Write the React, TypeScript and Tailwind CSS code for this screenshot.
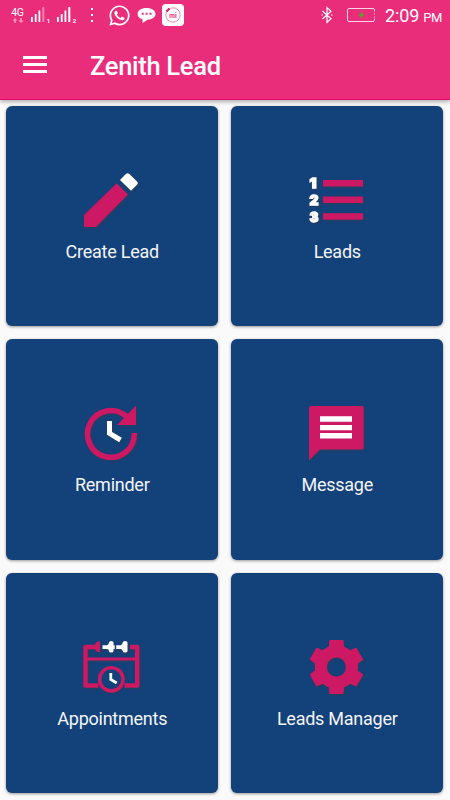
import type { ReactNode } from "react";
import { FaWhatsapp } from "react-icons/fa";

const PINK = "#cd1864";

const IconBox = ({ children }: { children: ReactNode }) => (
    <svg width="60" height="60" viewBox="0 0 60 60" fill={PINK} className="drop-shadow-[1px_1px_1px_rgba(60,60,60,0.55)]">
        {children}
    </svg>
);

const PencilIcon = () => (
    <IconBox>
        <path d="M2 45L34.7 13.3L46 24.5L14 57H2Z" />
        <path d="M38 10L43.8 4Q45.6 2.4 47.4 4L55 11.4Q56.6 13 55 14.8L49 20.8Z" fill="white" />
    </IconBox>
);

const ListIcon = () => (
    <IconBox>
        <rect x="16" y="10" width="40" height="6.5" />
        <rect x="16" y="26.5" width="40" height="6.5" />
        <rect x="16" y="43.2" width="40" height="6.5" />
        <g fill="white" stroke="white" strokeWidth="1.3" fontFamily="Inter, sans-serif" fontSize="13.6" fontWeight="900">
            <text x="2.5" y="18.2" textLength="7" lengthAdjust="spacingAndGlyphs">1</text>
            <text x="2.5" y="35" textLength="9" lengthAdjust="spacingAndGlyphs">2</text>
            <text x="2.5" y="52" textLength="9" lengthAdjust="spacingAndGlyphs">3</text>
        </g>
    </IconBox>
);

const ReminderIcon = () => (
    <IconBox>
        <path d="M52.3 30A23.4 23.4 0 1 1 44.5 13.5" fill="none" stroke={PINK} strokeWidth="5.6" />
        <path d="M54 2.5V22H35Z" />
        <path d="M27.5 18V30.3L38.5 37" fill="none" stroke="white" strokeWidth="5" />
    </IconBox>
);

const MessageIcon = () => (
    <IconBox>
        <path d="M4 3H55Q56.7 3 56.7 5V44.5Q56.7 46.5 55 46.5H13L2 57.5V5Q2 3 4 3Z" />
        <path d="M13 13.3h32v5.4H13zM13 22h32v5.2H13zM13 30h32v5.6H13z" fill="white" />
    </IconBox>
);

const CalendarIcon = () => (
    <IconBox>
        <path d="M14.5 11H3.5V49.4H16.5M48 11H55.2V49.4H42.5" fill="none" stroke={PINK} strokeWidth="4.5" strokeLinejoin="round" />
        <path d="M3 23H56" stroke={PINK} strokeWidth="3" />
        <path d="M13 9Q14 5.5 16 5.5H18V16H16Q14 16 13 13Z" />
        <g fill="white">
            <path d="M20.5 9.3H25Q27 8.7 27 6.5Q27.3 5 29 5Q31.5 5 31.5 6.5V9.3H32.7V12.9H31.5V15Q31.5 16.5 29 16.5Q27 16.5 27 15Q26.8 13 25 12.9H20.5Z" />
            <path d="M34.2 9.3H38.5Q40.7 8.7 40.7 6.5Q41 5 43 5Q45.5 5 45.5 6.5V15Q45.5 16.5 43 16.5Q40.7 16.5 40.7 15Q40.3 13 38.5 12.9H34.2Z" />
        </g>
        <circle cx="29.3" cy="43.3" r="11.7" fill="#13417a" stroke={PINK} strokeWidth="3.4" />
        <path d="M28.8 37V43.5L34.7 47" fill="none" stroke="white" strokeWidth="2.8" />
    </IconBox>
);

const GearIcon = () => (
    <IconBox>
        <g transform="translate(29.4 31)">
            <circle r="14.5" fill="none" stroke={PINK} strokeWidth="10" />
            {[0, 60, 120, 180, 240, 300].map((angle) => (
                <path key={angle} transform={`rotate(${angle})`} d="M-6.2 -27H6.2Q7 -27 7.1 -26.2L7.6 -20.4Q9.5 -19.6 11.5 -18L7.5 -12H-7.5L-11.5 -18Q-9.5 -19.6 -7.6 -20.4L-7.1 -26.2Q-7 -27 -6.2 -27Z" />
            ))}
        </g>
    </IconBox>
);

const tiles = [
    { label: "Create Lead", icon: <PencilIcon /> },
    { label: "Leads", icon: <ListIcon /> },
    { label: "Reminder", icon: <ReminderIcon /> },
    { label: "Message", icon: <MessageIcon /> },
    { label: "Appointments", icon: <CalendarIcon /> },
    { label: "Leads Manager", icon: <GearIcon /> },
];

const Signal = ({ sim }: { sim: number }) => (
    <svg width="20" height="18" viewBox="0 0 20 18" fill="white">
        <path d="M0 11h1.8v5H0zM3.8 8h1.8v8H3.8zM7.5 4.5h1.8V16H7.5z" />
        <path d="M11.3 1h2v15h-2z" opacity={sim === 1 ? 0.4 : 1} />
        <text x="15.8" y="17.3" fontSize="6" fontWeight="700">{sim}</text>
    </svg>
);

const StatusBar = () => (
    <div className="flex h-[30px] items-center pl-[11px] pr-[10px] text-white">
        <div className="flex w-[13px] flex-col items-center">
            <span className="text-[10.5px] leading-[11px] tracking-[-0.3px]">4G</span>
            <svg width="12" height="5" viewBox="0 0 12 5" fill="white" opacity="0.5">
                <path d="M3 0L5.5 2.5H3.8V5H2.2V2.5H0.5ZM9 5L6.5 2.5H8.2V0H9.8V2.5H11.5Z" />
            </svg>
        </div>
        <div className="ml-[7px] flex gap-[6px]">
            <Signal sim={1} />
            <Signal sim={2} />
        </div>
        <svg className="ml-[13px]" width="4" height="16" viewBox="0 0 4 16" fill="white">
            <path d="M1 1h2v2H1zM1 7h2v2H1zM1 13h2v2H1z" />
        </svg>
        <FaWhatsapp size={23} className="ml-[14px]" />
        <svg className="ml-[6px]" width="19" height="17" viewBox="0 0 19 17">
            <path d="M9.5 1C14.8 1 18.5 3.6 18.5 7S14.8 12.7 10.5 12.7L5.5 16V12.3C2.2 11.5 0.6 9.4 0.6 7C0.6 3.6 4.2 1 9.5 1Z" fill="white" />
            <path d="M4.7 5.8h2v2h-2zM8.6 5.8h2v2h-2zM12.5 5.8h2v2h-2z" fill="#e92d7b" />
        </svg>
        <svg className="ml-[6px]" width="22" height="22" viewBox="0 0 22 22">
            <rect width="22" height="22" rx="4" fill="white" />
            <circle cx="11" cy="11" r="7.2" fill="none" stroke="#ec5090" strokeWidth="0.7" />
            <path d="M4.5 7.5L7.5 4.5" stroke="#dd1763" strokeWidth="2" />
            <text x="7.3" y="13.5" fontSize="6.5" fontWeight="700" fill="#e92d7b">mi</text>
        </svg>

        <svg className="ml-auto" width="12" height="18" viewBox="0 0 12 18" fill="none" stroke="white" strokeWidth="1.2">
            <path d="M1.5 5L10 12.8L6 16.5V1.5L10 5.2L1.5 13" />
            <path d="M0.5 9H2M10 9H11.5" />
        </svg>
        <svg className="ml-[14px]" width="29" height="14" viewBox="0 0 29 14">
            <rect x="0.5" y="0.5" width="27" height="13" rx="1.5" fill="none" stroke="white" strokeOpacity="0.8" />
            <path d="M27.5 3.5V10.5" stroke="#e92d7b" strokeWidth="1.2" strokeDasharray="2 1" />
            <path d="M16 3L11.5 7.7H14L13 11L17.5 6.3H15Z" fill="#4caf1e" />
        </svg>
        <span className="ml-[9px] w-[55px] whitespace-nowrap pt-[3px] text-[18px] leading-[20px] tracking-[-0.1px]">
            2:09<span className="ml-1 text-[13px] tracking-[-0.4px]">PM</span>
        </span>
    </div>
);

export default function App() {
    return (
        <div className="flex h-[800px] w-[450px] flex-col overflow-hidden bg-[#fafafa] font-['Roboto',sans-serif]">
            <header className="z-10 h-[100px] shrink-0 border-b border-[#e4086a] bg-[#e92d7b] shadow-[0_2px_4px_rgba(0,0,0,0.3)]">
                <StatusBar />
                <div className="flex h-[69px] items-center pl-[23px] text-white">
                    <button className="flex w-6 flex-col gap-[4px]">
                        <span className="h-[3px] bg-white" />
                        <span className="h-[3px] bg-white" />
                        <span className="h-[3px] bg-white" />
                    </button>
                    <h1 className="ml-[43px] pt-[2px] text-[25.5px] font-medium leading-8 tracking-[-0.3px]">Zenith Lead</h1>
                </div>
            </header>

            <main className="grid grid-cols-2 gap-[13px] pl-[6px] pr-[7px] pt-[6.2px]">
                {tiles.map((tile) => (
                    <button
                        key={tile.label}
                        className="flex h-[220.3px] flex-col items-center rounded-[6px] bg-[#13417a] pt-[63.5px] shadow-[0_1px_3px_rgba(0,0,0,0.4)]"
                    >
                        {tile.icon}
                        <span className="mt-[10.4px] pl-[0.5px] text-[18px] leading-6 tracking-[-0.25px] text-[#f3f5f8]">{tile.label}</span>
                    </button>
                ))}
            </main>
        </div>
    );
}
